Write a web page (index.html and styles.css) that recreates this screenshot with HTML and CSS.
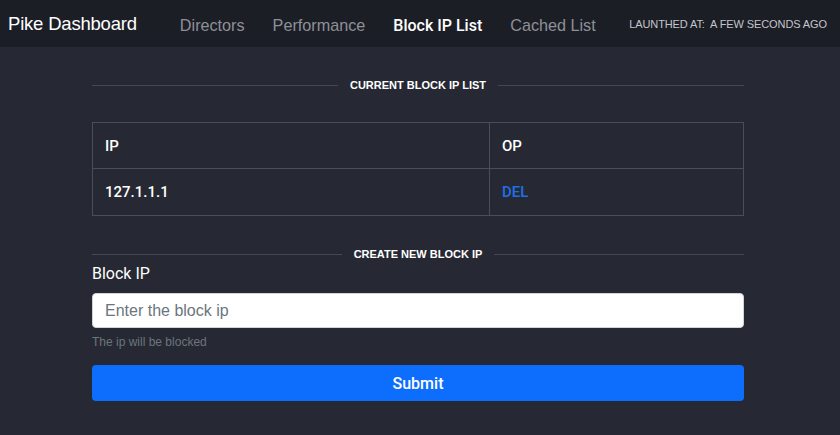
FILE: index.html
```html
<!DOCTYPE html>
<html>
<head>
<meta charset="utf-8">
<link rel="stylesheet" href="styles.css">
</head>
<body>
<nav class="navbar">
  <div class="brand">Pike Dashboard</div>
  <ul class="nav-links">
    <li class="nav-link">Directors</li>
    <li class="nav-link">Performance</li>
    <li class="nav-link active">Block IP List</li>
    <li class="nav-link">Cached List</li>
  </ul>
  <div class="launched">Launthed at:&nbsp; a few seconds ago</div>
</nav>
<main class="container">
  <div class="divider divider-first"><span>Current Block IP List</span></div>
  <table class="ip-table">
    <thead>
      <tr><th class="col-ip">IP</th><th>OP</th></tr>
    </thead>
    <tbody>
      <tr><td>127.1.1.1</td><td><a class="del">DEL</a></td></tr>
    </tbody>
  </table>
  <div class="divider divider-second"><span>Create New Block IP</span></div>
  <form class="form">
    <label class="label">Block IP</label>
    <input class="input" type="text" placeholder="Enter the block ip">
    <div class="help">The ip will be blocked</div>
    <button class="submit" type="button">Submit</button>
  </form>
</main>
</body>
</html>
```
FILE: styles.css
```css
* { box-sizing: border-box; }
html, body { margin: 0; padding: 0; }
body {
  background: #262933;
  font-family: "Liberation Sans", Arial, sans-serif;
  color: #ffffff;
  height: 435px;
  overflow: hidden;
}
.navbar {
  height: 47px;
  background: #1c1e26;
  display: flex;
  align-items: center;
  padding: 0 13px 0 8px;
}
.brand {
  font-size: 18.5px;
  color: #ffffff;
  letter-spacing: -0.2px;
  margin-right: 29px;
}
.nav-links {
  display: flex;
  align-items: baseline;
  list-style: none;
  margin: 0;
  padding: 3px 0 0 0;
  flex: 1;
}
.nav-link {
  font-size: 16.2px;
  color: #8e9099;
  padding: 0 14px;
}
.nav-link.active {
  color: #ffffff;
  font-family: Roboto, "Liberation Sans", sans-serif;
  font-weight: 500;
  font-size: 16px;
}
.launched {
  font-size: 11px;
  text-transform: uppercase;
  color: #c3c5cc;
  letter-spacing: -0.1px;
}
.container {
  width: 652px;
  margin: 0 0 0 92px;
}
.divider {
  display: flex;
  align-items: center;
  gap: 12px;
  font-size: 11px;
  font-weight: bold;
  text-transform: uppercase;
  color: #ffffff;
  height: 14px;
}
.divider::before, .divider::after {
  content: "";
  flex: 1;
  height: 1px;
  background: #444855;
}
.divider-first { margin-top: 31px; }
.divider-second { margin-top: 31px; }
.ip-table {
  width: 100%;
  border-collapse: collapse;
  margin-top: 30px;
  font-family: Roboto, "Liberation Sans", sans-serif;
  font-size: 15px;
}
.ip-table th, .ip-table td {
  border: 1px solid #4b4e5a;
  text-align: left;
  padding: 0 12px;
  height: 46px;
  font-weight: 500;
}
.ip-table td { height: 47px; }
.col-ip { width: 397px; }
.del { color: #1f6fe8; }
.form {
  display: flex;
  flex-direction: column;
}
.label {
  font-family: Roboto, "Liberation Sans", sans-serif;
  font-size: 16px;
  margin-top: 3px;
  line-height: 20px;
  font-weight: 400;
}
.input {
  margin-top: 9px;
  height: 35px;
  border: 1px solid #ced4da;
  border-radius: 4px;
  background: #ffffff;
  padding: 0 12px;
  font-family: "Liberation Sans", Arial, sans-serif;
  font-size: 16px;
  color: #495057;
  outline: none;
}
.input::placeholder { color: #6c757d; }
.help {
  margin-top: 7px;
  font-size: 12px;
  color: #6c757d;
  line-height: 14px;
}
.submit {
  margin-top: 16px;
  height: 36px;
  border: none;
  border-radius: 4px;
  background: #0d6efd;
  color: #ffffff;
  font-family: Roboto, "Liberation Sans", sans-serif;
  font-size: 16px;
  font-weight: 500;
}
```
